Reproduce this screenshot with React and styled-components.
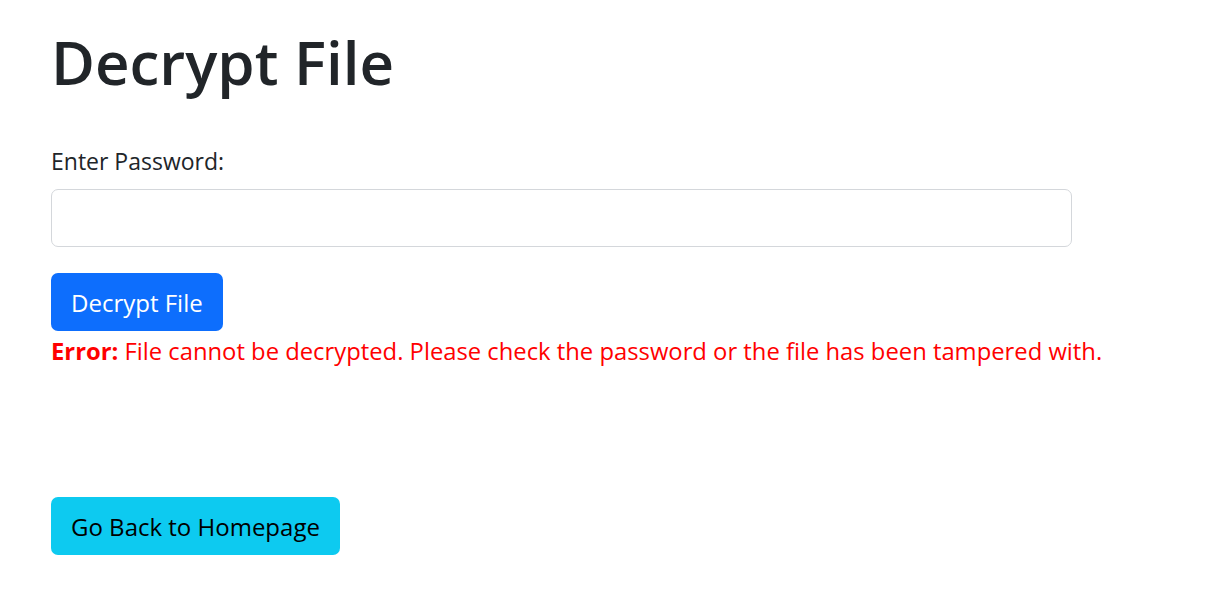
import styled, { createGlobalStyle } from 'styled-components';

const GlobalStyle = createGlobalStyle`
  html, body {
    margin: 0;
    padding: 0;
    background: #fff;
  }
  body {
    font-family: "Open Sans", "Noto Sans", "Liberation Sans", sans-serif;
    color: #212529;
  }
`;

const App = () => {
  return (
    <>
      <GlobalStyle />
      <Page>
        <Title>Decrypt File</Title>
        <Form onSubmit={(e) => e.preventDefault()}>
          <Label htmlFor="password">Enter Password:</Label>
          <PasswordInput id="password" type="password" name="password" />
          <Button type="submit" variant="primary">
            Decrypt File
          </Button>
        </Form>
        <ErrorText>
          <strong>Error:</strong> File cannot be decrypted. Please check the
          password or the file has been tampered with.
        </ErrorText>
        <Button type="button" variant="info" as="a" href="#">
          Go Back to Homepage
        </Button>
      </Page>
    </>
  );
};

const Page = styled.div`
  padding: 26px 51px;
  display: flex;
  flex-direction: column;
  align-items: flex-start;
`;
const Title = styled.h1`
  margin: 0 0 45px;
  font-size: 60px;
  font-weight: 600;
  line-height: 72px;
  color: #212529;
`;
const Form = styled.form`
  display: flex;
  flex-direction: column;
  align-items: flex-start;
  width: 1021px;
`;
const Label = styled.label`
  font-size: 23px;
  line-height: 36px;
  margin-bottom: 10px;
`;
const PasswordInput = styled.input`
  box-sizing: border-box;
  width: 100%;
  height: 58px;
  padding: 9px 18px;
  font-size: 24px;
  border: 1px solid #d4d7db;
  border-radius: 7px;
  outline: none;
  margin-bottom: 26px;
`;
const Button = styled.button`
  box-sizing: border-box;
  display: inline-flex;
  align-items: center;
  height: 58px;
  padding: 0 20px;
  font-family: inherit;
  font-size: 24px;
  border: none;
  border-radius: 7px;
  text-decoration: none;
  cursor: pointer;
  color: ${(props) => (props.variant === 'info' ? '#000' : '#fff')};
  background-color: ${(props) =>
    props.variant === 'info' ? '#0dcaf0' : '#0d6efd'};
`;
const ErrorText = styled.p`
  margin: 2px 0 128px;
  font-size: 23.8px;
  line-height: 36px;
  white-space: nowrap;
  color: #ff0000;
  strong {
    font-weight: 700;
  }
`;

export default App;
